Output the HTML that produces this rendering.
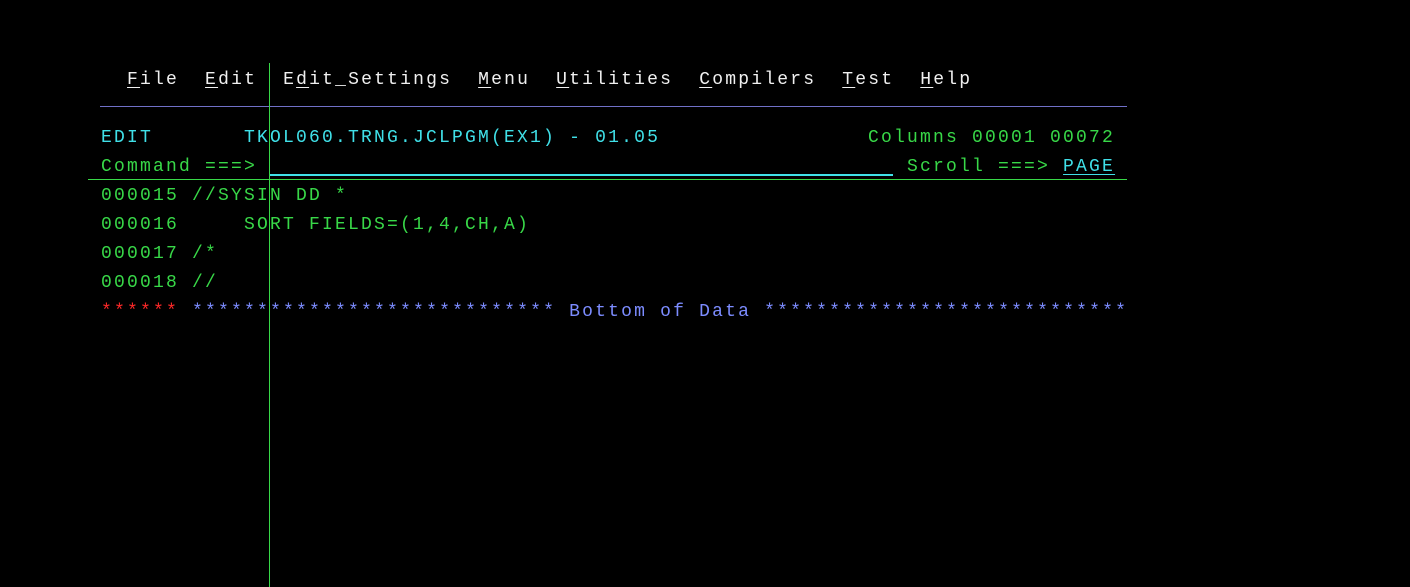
<!DOCTYPE html>
<html><head><style>
html,body{margin:0;padding:0;background:#000;width:1410px;height:587px;overflow:hidden}
.r{position:absolute;left:101px;height:29px;line-height:29px;white-space:pre;font-family:"Liberation Mono",monospace;font-size:18px;letter-spacing:2.2px;}
.w{color:#f0f0f0}.c{color:#40e0e8}.g{color:#38d848}.b{color:#7c8cff}.red{color:#ff2828}
u{text-decoration:underline;text-underline-offset:3px}
.line{position:absolute}
</style></head><body>
<div class="r w" style="top:66px;left:101px">  <u>F</u>ile  <u>E</u>dit  E<u>d</u>it_Settings  <u>M</u>enu  <u>U</u>tilities  <u>C</u>ompilers  <u>T</u>est  <u>H</u>elp</div>
<div class="line" style="left:100px;top:106px;width:1027px;height:1px;background:#7070c8"></div>
<div class="r c" style="top:124px">EDIT       TKOL060.TRNG.JCLPGM(EX1) - 01.05</div>
<div class="r g" style="top:124px;left:868px">Columns 00001 00072</div>
<div class="r g" style="top:153px">Command ===></div>
<div class="line" style="left:270px;top:174px;width:623px;height:2px;background:#40e0e8"></div>
<div class="r g" style="top:153px;left:907px">Scroll ===> <span class="c"><u>PAGE</u></span></div>
<div class="line" style="left:88px;top:179px;width:1039px;height:1px;background:#38d848"></div>
<div class="r g" style="top:182px">000015 //SYSIN DD *</div>
<div class="r g" style="top:211px">000016     SORT FIELDS=(1,4,CH,A)</div>
<div class="r g" style="top:240px">000017 /*</div>
<div class="r g" style="top:269px">000018 //</div>
<div class="r" style="top:298px"><span class="red">******</span> <span class="b">**************************** Bottom of Data ****************************</span></div>
<div class="line" style="left:269px;top:63px;width:1px;height:524px;background:#38d848"></div>
</body></html>
